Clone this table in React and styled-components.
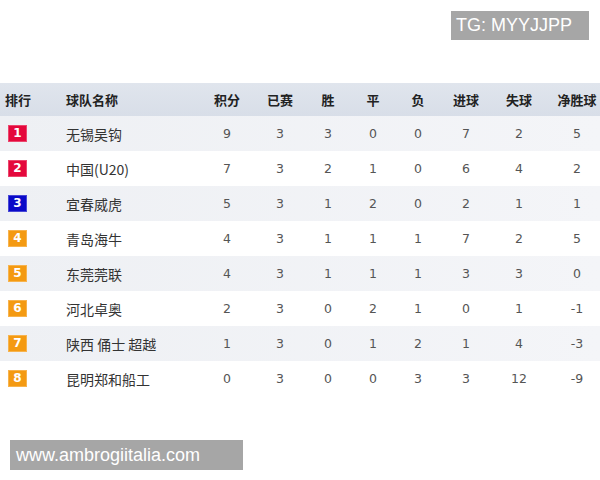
import React from 'react'
import styled, { createGlobalStyle } from 'styled-components';

const GlobalStyle = createGlobalStyle`
  body {
    margin: 0;
    background: #fff;
    font-family: "Noto Sans CJK SC", "DejaVu Sans", sans-serif;
  }
`

const teams = [
  { rank: 1, name: "无锡吴钩", stats: [9, 3, 3, 0, 0, 7, 2, 5] },
  { rank: 2, name: "中国(U20)", stats: [7, 3, 2, 1, 0, 6, 4, 2] },
  { rank: 3, name: "宜春威虎", stats: [5, 3, 1, 2, 0, 2, 1, 1] },
  { rank: 4, name: "青岛海牛", stats: [4, 3, 1, 1, 1, 7, 2, 5] },
  { rank: 5, name: "东莞莞联", stats: [4, 3, 1, 1, 1, 3, 3, 0] },
  { rank: 6, name: "河北卓奥", stats: [2, 3, 0, 2, 1, 0, 1, -1] },
  { rank: 7, name: "陕西 俑士 超越", stats: [1, 3, 0, 1, 2, 1, 4, -3] },
  { rank: 8, name: "昆明郑和船工", stats: [0, 3, 0, 0, 3, 3, 12, -9] },
]

const headers = ["积分", "已赛", "胜", "平", "负", "进球", "失球", "净胜球"]

const badgeColor = (rank) => {
  if (rank <= 2) return "#e4083c"
  if (rank === 3) return "#0a0ac8"
  return "#f49a12"
}

const App = () => {
  return (
    <Page>
      <GlobalStyle />
      <TopBar>
        <Tag>TG: MYYJJPP</Tag>
      </TopBar>
      <Table>
        <HeadRow>
          <RankHead>排行</RankHead>
          <NameHead>球队名称</NameHead>
          {headers.map((h) => (
            <HeadCell key={h}>{h}</HeadCell>
          ))}
        </HeadRow>
        {teams.map((t) => (
          <Row key={t.rank} $shaded={t.rank % 2 === 1}>
            <RankCell>
              <Badge $color={badgeColor(t.rank)}>{t.rank}</Badge>
            </RankCell>
            <NameCell>{t.name}</NameCell>
            {t.stats.map((s, i) => (
              <NumCell key={i}>{s}</NumCell>
            ))}
          </Row>
        ))}
      </Table>
      <Footer>
        <Site>www.ambrogiitalia.com</Site>
      </Footer>
    </Page>
  )
}

const Page = styled.div`
  width: 600px;
  height: 480px;
  display: flex;
  flex-direction: column;
`

const TopBar = styled.div`
  display: flex;
  justify-content: flex-end;
  padding: 11px 11px 0 0;
  height: 83px;
  box-sizing: border-box;
`

const Tag = styled.div`
  background: #a6a6a6;
  color: #fff;
  font-family: "Liberation Sans", Arial, sans-serif;
  font-size: 18px;
  height: 29px;
  line-height: 29px;
  padding: 0 13px 0 5px;
  width: 120px;
`

const cols = "50px 150px 54px 52px 44px 46px 44px 52px 54px 54px"

const HeadRow = styled.div`
  display: grid;
  grid-template-columns: ${cols};
  height: 33px;
  align-items: center;
  background: linear-gradient(#e0e5ed, #d8dee8);
  font-weight: 700;
  font-size: 13px;
  color: #222;
`

const Table = styled.div`
  display: flex;
  flex-direction: column;
`

const RankHead = styled.div`
  padding-left: 5px;
`

const NameHead = styled.div`
  padding-left: 16px;
`

const HeadCell = styled.div`
  text-align: center;
  &:last-child {
    padding-left: 8px;
    white-space: nowrap;
  }
`

const Row = styled.div`
  display: grid;
  grid-template-columns: ${cols};
  height: 35px;
  align-items: center;
  background: ${(p) => (p.$shaded ? "linear-gradient(90deg, #eef0f4, #f4f5f8)" : "#fff")};
`

const RankCell = styled.div`
  padding-left: 8px;
`

const Badge = styled.div`
  width: 19px;
  height: 17px;
  background: ${(p) => p.$color};
  color: #fff;
  font-family: "DejaVu Sans", sans-serif;
  font-weight: 700;
  font-size: 12px;
  line-height: 17px;
  text-align: center;
  box-shadow: inset 0 0 0 1px rgba(255, 255, 255, 0.25);
`

const NameCell = styled.div`
  padding-left: 16px;
  font-size: 14px;
  color: #333;
  white-space: nowrap;
`

const NumCell = styled.div`
  text-align: center;
  font-family: "DejaVu Sans", sans-serif;
  font-size: 12.5px;
  color: #555;
  &:last-child {
    padding-left: 8px;
  }
`

const Footer = styled.div`
  margin-top: 44px;
  padding-left: 10px;
`

const Site = styled.div`
  width: 233px;
  height: 30px;
  box-sizing: border-box;
  background: #a6a6a6;
  color: #fff;
  font-family: "Liberation Sans", Arial, sans-serif;
  font-size: 18px;
  line-height: 30px;
  padding-left: 6px;
`

export default App;
